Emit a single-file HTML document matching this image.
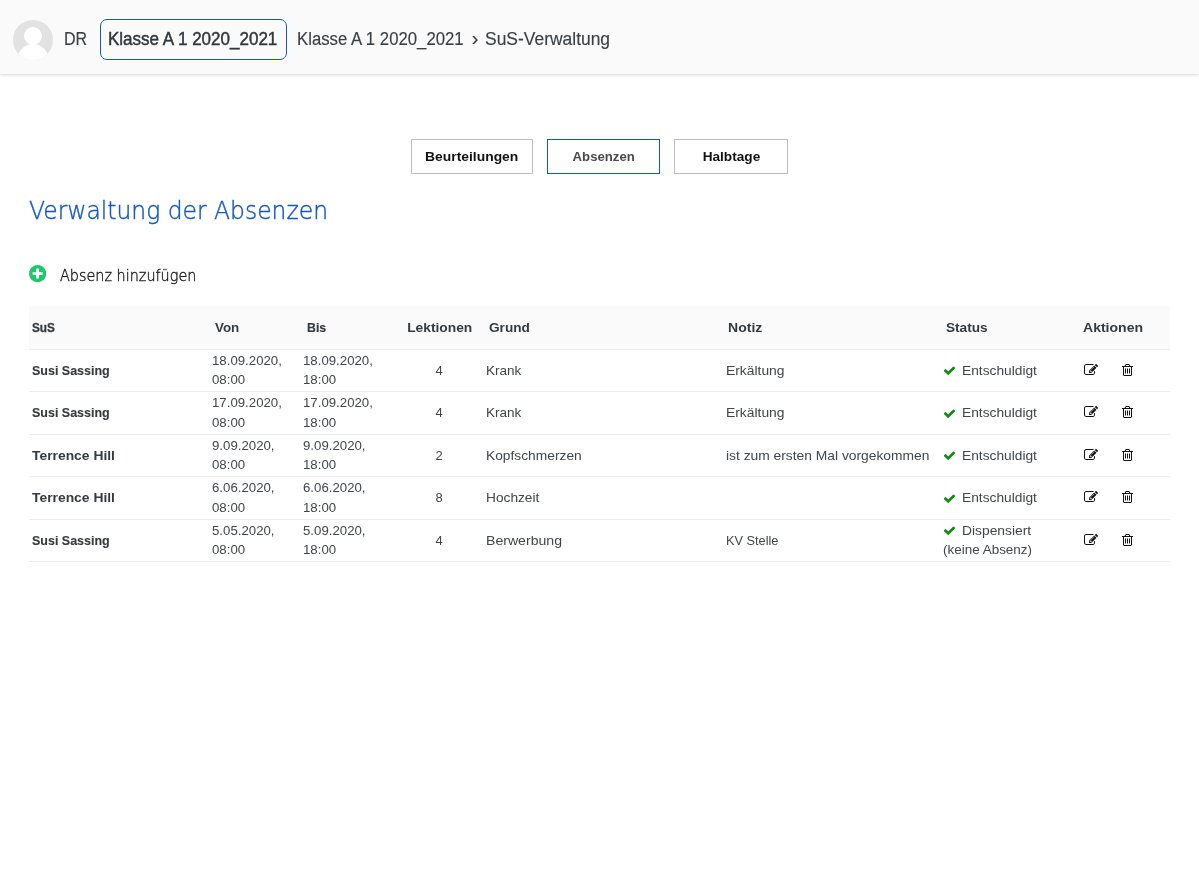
<!DOCTYPE html>
<html lang="de">
<head>
<meta charset="utf-8">
<title>SuS-Verwaltung</title>
<style>
*{box-sizing:border-box;margin:0;padding:0}
html,body{width:1199px;height:870px;overflow:hidden;background:#fff}
body{font-family:"Liberation Sans",sans-serif;color:#373a3c;position:relative}
#app{position:absolute;left:0;top:0;width:1199px;height:870px;will-change:transform}
.abs{position:absolute;white-space:nowrap}
/* ---------- header ---------- */
header{position:absolute;left:0;top:0;width:1199px;height:74px;background:#fafafa;box-shadow:0 1px 3px rgba(0,0,0,.16)}
.avatar{position:absolute;left:13px;top:19.7px;width:40px;height:40px}
.hx{display:inline-block;transform-origin:0 50%;font-size:18px;line-height:22px;color:#3a3f44;top:28px;-webkit-text-stroke:.15px #3a3f44}
.klass{position:absolute;left:100px;top:19px;width:187px;height:41px;border:1px solid #0f57c6;border-radius:7px;background:transparent;box-shadow:0 0 0 1px #fff,inset 0 0 0 1px #fff;
  padding:8px 0 0 7px;white-space:nowrap}
.klass .hx{color:#32373c;-webkit-text-stroke:.45px #32373c}
/* ---------- tabs ---------- */
nav.tabs{position:absolute;left:411px;top:139px;height:35px;white-space:nowrap;font-size:0}
.tabs button{display:inline-block;vertical-align:top;height:35px;border:1px solid #bdbdbd;background:#fff;
  font:bold 13px/33px "Liberation Sans",sans-serif;color:#111;text-align:center;margin-right:14px;padding:0}
.tabs button span{display:inline-block}
.tabs button.on{border-color:#0f57c6;color:#4a4a4a}
/* ---------- title ---------- */
h1{position:absolute;left:28.8px;top:193px;font-family:"DejaVu Sans","Liberation Sans",sans-serif;font-weight:200;font-size:25.5px;line-height:34px;color:#1257c7;white-space:nowrap;transform-origin:0 50%;transform:scaleX(.919);-webkit-text-stroke:.4px #1257c7}
.add{position:absolute;left:28px;top:262px;height:24px}
.add svg{position:absolute;left:.6px;top:3.3px;width:17.2px;height:17.2px}
.add span{position:absolute;left:31.8px;top:3.7px;font-family:"DejaVu Sans","Liberation Sans",sans-serif;font-weight:200;font-size:15.8px;line-height:20px;color:#1c1c1c;white-space:nowrap;transform-origin:0 50%;transform:scaleX(.9115);-webkit-text-stroke:.4px #1c1c1c}
/* ---------- table ---------- */
table{position:absolute;left:29px;top:306px;width:1141px;border-collapse:collapse;table-layout:fixed;font-size:13px;line-height:19.5px;color:#41464b}
th{background:#fafafa;height:43px;text-align:left;font-weight:bold;color:#353a3f;border-bottom:1px solid #ededed;padding:0 0 0 6px;vertical-align:middle}
td{border-bottom:1px solid #ededed;padding:0 0 0 3px;vertical-align:middle;height:42.5px}
td.n{font-weight:bold;color:#353a3f}
td.c,th.c{text-align:center;padding:0}
.sx{display:inline-block;transform-origin:0 50%;white-space:nowrap}
th.c .sx,td.c .sx{transform-origin:50% 50%}
td.d{padding-left:2.5px}
td.d .sx{transform:scaleX(1.018)}
.ic{display:inline-block;vertical-align:middle}
.ck{width:13px;height:13px;margin:-1px 6px 0 0}
.act{display:inline-block;vertical-align:middle;height:16px;position:relative;top:-4px;left:.8px}
.ed{width:14px;height:14px;margin-right:24.6px}
.tr{width:11px;height:14px}
</style>
</head>
<body>
<div id="app">

<header>
  <svg class="avatar" viewBox="0 0 40 40"><defs><clipPath id="avc"><circle cx="20" cy="20" r="20"/></clipPath></defs>
    <circle cx="20" cy="20" r="20" fill="#e2e2e2"/>
    <g clip-path="url(#avc)" fill="#fff"><circle cx="20" cy="16" r="9"/><ellipse cx="20" cy="41" rx="16" ry="17"/></g></svg>
  <span class="abs hx user" style="left:64px;transform:scaleX(.888)">DR</span>
  <div class="klass"><span class="hx" style="transform:scaleX(.945)">Klasse A 1 2020_2021</span></div>
  <nav class="crumbs">
    <span class="abs hx" style="left:297px;transform:scaleX(.93)">Klasse A 1 2020_2021</span>
    <span class="abs hx sep" style="left:471.5px;top:26.5px;font-size:21px">›</span>
    <span class="abs hx" style="left:485px;transform:scaleX(.969)">SuS-Verwaltung</span>
  </nav>
</header>

<nav class="tabs">
  <button style="width:122px"><span style="transform:scaleX(1.066)">Beurteilungen</span></button>
  <button class="on" style="width:113px"><span style="transform:scaleX(1.015)">Absenzen</span></button>
  <button style="width:114px"><span style="transform:scaleX(1.05)">Halbtage</span></button>
</nav>

<h1>Verwaltung der Absenzen</h1>

<a class="add">
  <svg viewBox="0 0 1536 1536"><g transform="translate(0,1408) scale(1,-1)"><path fill="#1dc96b" d="M1216 576v128q0 26 -19 45t-45 19h-256v256q0 26 -19 45t-45 19h-128q-26 0 -45 -19t-19 -45v-256h-256q-26 0 -45 -19t-19 -45v-128q0 -26 19 -45t45 -19h256v-256q0 -26 19 -45t45 -19h128q26 0 45 19t19 45v256h256q26 0 45 19t19 45zM1536 640q0 -209 -103 -385.5 t-279.5 -279.5t-385.5 -103t-385.5 103t-279.5 279.5t-103 385.5t103 385.5t279.5 279.5t385.5 103t385.5 -103t279.5 -279.5t103 -385.5z"/></g></svg>
  <span>Absenz hinzufügen</span>
</a>

<table>
  <colgroup><col style="width:180.5px"><col style="width:91px"><col style="width:94.5px"><col style="width:88px"><col style="width:240px"><col style="width:217px"><col style="width:140px"><col style="width:90px"></colgroup>
  <thead><tr><th style="padding-left:3px"><span class="sx" style="transform:scaleX(0.9072);-webkit-text-stroke:.3px #353a3f">SuS</span></th><th style="padding-left:5px"><span class="sx" style="transform:scaleX(1.03)">Von</span></th><th><span class="sx" style="transform:scaleX(0.9474);-webkit-text-stroke:.15px #353a3f">Bis</span></th><th class="c" style="padding-left:2px"><span class="sx" style="transform:scaleX(1.06)">Lektionen</span></th><th><span class="sx" style="transform:scaleX(1.049)">Grund</span></th><th style="padding-left:5px"><span class="sx" style="transform:scaleX(1.08)">Notiz</span></th><th><span class="sx" style="transform:scaleX(1.0477)">Status</span></th><th style="padding-left:3px"><span class="sx" style="transform:scaleX(1.0795)">Aktionen</span></th></tr></thead>
  <tbody>
  <tr><td class="n"><span class="sx" style="transform:scaleX(0.9605);-webkit-text-stroke:.12px #353a3f">Susi Sassing</span></td><td class="d"><span class="sx">18.09.2020,</span><br><span class="sx">08:00</span></td><td class="d"><span class="sx">18.09.2020,</span><br><span class="sx">18:00</span></td><td class="c">4</td><td><span class="sx" style="transform:scaleX(1.0412)">Krank</span></td><td><span class="sx" style="transform:scaleX(1.0648)">Erkältung</span></td><td class="s"><svg class="ic ck" viewBox="0 0 1792 1792"><g transform="translate(0,1536) scale(1,-1)"><path fill="#0f8a0f" d="M1671 970q0 -40 -28 -68l-724 -724l-136 -136q-28 -28 -68 -28t-68 28l-136 136l-362 362q-28 28 -28 68t28 68l136 136q28 28 68 28t68 -28l294 -295l656 657q28 28 68 28t68 -28l136 -136q28 -28 28 -68z"/></g></svg><span class="sx" style="transform:scaleX(1.0581)">Entschuldigt</span></td><td class="a"><a class="act"><svg class="ic ed" viewBox="0 0 1792 1792"><g transform="translate(0,1536) scale(1,-1)"><path fill="#111" d="M888 352l116 116l-152 152l-116 -116v-56h96v-96h56zM1328 1072q-16 16 -33 -1l-350 -350q-17 -17 -1 -33t33 1l350 350q17 17 1 33zM1408 478v-190q0 -119 -84.5 -203.5t-203.5 -84.5h-832q-119 0 -203.5 84.5t-84.5 203.5v832q0 119 84.5 203.5t203.5 84.5h832q63 0 117 -25q15 -7 18 -23q3 -17 -9 -29l-49 -49q-14 -14 -32 -8q-23 6 -45 6h-832q-66 0 -113 -47t-47 -113v-832q0 -66 47 -113t113 -47h832q66 0 113 47t47 113v126q0 13 9 22l64 64q15 15 35 7t20 -29zM1312 1216l288 -288l-672 -672h-288v288zM1756 1084l-92 -92l-288 288l92 92q28 28 68 28t68 -28l152 -152q28 -28 28 -68t-28 -68z"/></g></svg></a><a class="act"><svg class="ic tr" viewBox="0 0 1408 1792"><g transform="translate(0,1536) scale(1,-1)"><path fill="#111" d="M512 800v-576q0 -14 -9 -23t-23 -9h-64q-14 0 -23 9t-9 23v576q0 14 9 23t23 9h64q14 0 23 -9t9 -23zM768 800v-576q0 -14 -9 -23t-23 -9h-64q-14 0 -23 9t-9 23v576q0 14 9 23t23 9h64q14 0 23 -9t9 -23zM1024 800v-576q0 -14 -9 -23t-23 -9h-64q-14 0 -23 9t-9 23v576q0 14 9 23t23 9h64q14 0 23 -9t9 -23zM1152 76v948h-896v-948q0 -22 7 -40.5t14.5 -27t10.5 -8.5h832q3 0 10.5 8.5t14.5 27t7 40.5zM480 1152h448l-48 117q-7 9 -17 11h-317q-10 -2 -17 -11zM1408 1120v-64q0 -14 -9 -23t-23 -9h-96v-948q0 -83 -47 -143.5t-113 -60.5h-832q-66 0 -113 58.5t-47 141.5v952h-96q-14 0 -23 9t-9 23v64q0 14 9 23t23 9h309l70 167q15 37 54 63t79 26h320q40 0 79 -26t54 -63l70 -167h309q14 0 23 -9t9 -23z"/></g></svg></a></td></tr>
  <tr><td class="n"><span class="sx" style="transform:scaleX(0.9605);-webkit-text-stroke:.12px #353a3f">Susi Sassing</span></td><td class="d"><span class="sx">17.09.2020,</span><br><span class="sx">08:00</span></td><td class="d"><span class="sx">17.09.2020,</span><br><span class="sx">18:00</span></td><td class="c">4</td><td><span class="sx" style="transform:scaleX(1.0412)">Krank</span></td><td><span class="sx" style="transform:scaleX(1.0648)">Erkältung</span></td><td class="s"><svg class="ic ck" viewBox="0 0 1792 1792"><g transform="translate(0,1536) scale(1,-1)"><path fill="#0f8a0f" d="M1671 970q0 -40 -28 -68l-724 -724l-136 -136q-28 -28 -68 -28t-68 28l-136 136l-362 362q-28 28 -28 68t28 68l136 136q28 28 68 28t68 -28l294 -295l656 657q28 28 68 28t68 -28l136 -136q28 -28 28 -68z"/></g></svg><span class="sx" style="transform:scaleX(1.0581)">Entschuldigt</span></td><td class="a"><a class="act"><svg class="ic ed" viewBox="0 0 1792 1792"><g transform="translate(0,1536) scale(1,-1)"><path fill="#111" d="M888 352l116 116l-152 152l-116 -116v-56h96v-96h56zM1328 1072q-16 16 -33 -1l-350 -350q-17 -17 -1 -33t33 1l350 350q17 17 1 33zM1408 478v-190q0 -119 -84.5 -203.5t-203.5 -84.5h-832q-119 0 -203.5 84.5t-84.5 203.5v832q0 119 84.5 203.5t203.5 84.5h832q63 0 117 -25q15 -7 18 -23q3 -17 -9 -29l-49 -49q-14 -14 -32 -8q-23 6 -45 6h-832q-66 0 -113 -47t-47 -113v-832q0 -66 47 -113t113 -47h832q66 0 113 47t47 113v126q0 13 9 22l64 64q15 15 35 7t20 -29zM1312 1216l288 -288l-672 -672h-288v288zM1756 1084l-92 -92l-288 288l92 92q28 28 68 28t68 -28l152 -152q28 -28 28 -68t-28 -68z"/></g></svg></a><a class="act"><svg class="ic tr" viewBox="0 0 1408 1792"><g transform="translate(0,1536) scale(1,-1)"><path fill="#111" d="M512 800v-576q0 -14 -9 -23t-23 -9h-64q-14 0 -23 9t-9 23v576q0 14 9 23t23 9h64q14 0 23 -9t9 -23zM768 800v-576q0 -14 -9 -23t-23 -9h-64q-14 0 -23 9t-9 23v576q0 14 9 23t23 9h64q14 0 23 -9t9 -23zM1024 800v-576q0 -14 -9 -23t-23 -9h-64q-14 0 -23 9t-9 23v576q0 14 9 23t23 9h64q14 0 23 -9t9 -23zM1152 76v948h-896v-948q0 -22 7 -40.5t14.5 -27t10.5 -8.5h832q3 0 10.5 8.5t14.5 27t7 40.5zM480 1152h448l-48 117q-7 9 -17 11h-317q-10 -2 -17 -11zM1408 1120v-64q0 -14 -9 -23t-23 -9h-96v-948q0 -83 -47 -143.5t-113 -60.5h-832q-66 0 -113 58.5t-47 141.5v952h-96q-14 0 -23 9t-9 23v64q0 14 9 23t23 9h309l70 167q15 37 54 63t79 26h320q40 0 79 -26t54 -63l70 -167h309q14 0 23 -9t9 -23z"/></g></svg></a></td></tr>
  <tr><td class="n"><span class="sx" style="transform:scaleX(1.0662)">Terrence Hill</span></td><td class="d"><span class="sx">9.09.2020,</span><br><span class="sx">08:00</span></td><td class="d"><span class="sx">9.09.2020,</span><br><span class="sx">18:00</span></td><td class="c">2</td><td><span class="sx" style="transform:scaleX(1.0599)">Kopfschmerzen</span></td><td><span class="sx" style="transform:scaleX(1.0626)">ist zum ersten Mal vorgekommen</span></td><td class="s"><svg class="ic ck" viewBox="0 0 1792 1792"><g transform="translate(0,1536) scale(1,-1)"><path fill="#0f8a0f" d="M1671 970q0 -40 -28 -68l-724 -724l-136 -136q-28 -28 -68 -28t-68 28l-136 136l-362 362q-28 28 -28 68t28 68l136 136q28 28 68 28t68 -28l294 -295l656 657q28 28 68 28t68 -28l136 -136q28 -28 28 -68z"/></g></svg><span class="sx" style="transform:scaleX(1.0581)">Entschuldigt</span></td><td class="a"><a class="act"><svg class="ic ed" viewBox="0 0 1792 1792"><g transform="translate(0,1536) scale(1,-1)"><path fill="#111" d="M888 352l116 116l-152 152l-116 -116v-56h96v-96h56zM1328 1072q-16 16 -33 -1l-350 -350q-17 -17 -1 -33t33 1l350 350q17 17 1 33zM1408 478v-190q0 -119 -84.5 -203.5t-203.5 -84.5h-832q-119 0 -203.5 84.5t-84.5 203.5v832q0 119 84.5 203.5t203.5 84.5h832q63 0 117 -25q15 -7 18 -23q3 -17 -9 -29l-49 -49q-14 -14 -32 -8q-23 6 -45 6h-832q-66 0 -113 -47t-47 -113v-832q0 -66 47 -113t113 -47h832q66 0 113 47t47 113v126q0 13 9 22l64 64q15 15 35 7t20 -29zM1312 1216l288 -288l-672 -672h-288v288zM1756 1084l-92 -92l-288 288l92 92q28 28 68 28t68 -28l152 -152q28 -28 28 -68t-28 -68z"/></g></svg></a><a class="act"><svg class="ic tr" viewBox="0 0 1408 1792"><g transform="translate(0,1536) scale(1,-1)"><path fill="#111" d="M512 800v-576q0 -14 -9 -23t-23 -9h-64q-14 0 -23 9t-9 23v576q0 14 9 23t23 9h64q14 0 23 -9t9 -23zM768 800v-576q0 -14 -9 -23t-23 -9h-64q-14 0 -23 9t-9 23v576q0 14 9 23t23 9h64q14 0 23 -9t9 -23zM1024 800v-576q0 -14 -9 -23t-23 -9h-64q-14 0 -23 9t-9 23v576q0 14 9 23t23 9h64q14 0 23 -9t9 -23zM1152 76v948h-896v-948q0 -22 7 -40.5t14.5 -27t10.5 -8.5h832q3 0 10.5 8.5t14.5 27t7 40.5zM480 1152h448l-48 117q-7 9 -17 11h-317q-10 -2 -17 -11zM1408 1120v-64q0 -14 -9 -23t-23 -9h-96v-948q0 -83 -47 -143.5t-113 -60.5h-832q-66 0 -113 58.5t-47 141.5v952h-96q-14 0 -23 9t-9 23v64q0 14 9 23t23 9h309l70 167q15 37 54 63t79 26h320q40 0 79 -26t54 -63l70 -167h309q14 0 23 -9t9 -23z"/></g></svg></a></td></tr>
  <tr><td class="n"><span class="sx" style="transform:scaleX(1.0662)">Terrence Hill</span></td><td class="d"><span class="sx">6.06.2020,</span><br><span class="sx">08:00</span></td><td class="d"><span class="sx">6.06.2020,</span><br><span class="sx">18:00</span></td><td class="c">8</td><td><span class="sx" style="transform:scaleX(1.0545)">Hochzeit</span></td><td></td><td class="s"><svg class="ic ck" viewBox="0 0 1792 1792"><g transform="translate(0,1536) scale(1,-1)"><path fill="#0f8a0f" d="M1671 970q0 -40 -28 -68l-724 -724l-136 -136q-28 -28 -68 -28t-68 28l-136 136l-362 362q-28 28 -28 68t28 68l136 136q28 28 68 28t68 -28l294 -295l656 657q28 28 68 28t68 -28l136 -136q28 -28 28 -68z"/></g></svg><span class="sx" style="transform:scaleX(1.0581)">Entschuldigt</span></td><td class="a"><a class="act"><svg class="ic ed" viewBox="0 0 1792 1792"><g transform="translate(0,1536) scale(1,-1)"><path fill="#111" d="M888 352l116 116l-152 152l-116 -116v-56h96v-96h56zM1328 1072q-16 16 -33 -1l-350 -350q-17 -17 -1 -33t33 1l350 350q17 17 1 33zM1408 478v-190q0 -119 -84.5 -203.5t-203.5 -84.5h-832q-119 0 -203.5 84.5t-84.5 203.5v832q0 119 84.5 203.5t203.5 84.5h832q63 0 117 -25q15 -7 18 -23q3 -17 -9 -29l-49 -49q-14 -14 -32 -8q-23 6 -45 6h-832q-66 0 -113 -47t-47 -113v-832q0 -66 47 -113t113 -47h832q66 0 113 47t47 113v126q0 13 9 22l64 64q15 15 35 7t20 -29zM1312 1216l288 -288l-672 -672h-288v288zM1756 1084l-92 -92l-288 288l92 92q28 28 68 28t68 -28l152 -152q28 -28 28 -68t-28 -68z"/></g></svg></a><a class="act"><svg class="ic tr" viewBox="0 0 1408 1792"><g transform="translate(0,1536) scale(1,-1)"><path fill="#111" d="M512 800v-576q0 -14 -9 -23t-23 -9h-64q-14 0 -23 9t-9 23v576q0 14 9 23t23 9h64q14 0 23 -9t9 -23zM768 800v-576q0 -14 -9 -23t-23 -9h-64q-14 0 -23 9t-9 23v576q0 14 9 23t23 9h64q14 0 23 -9t9 -23zM1024 800v-576q0 -14 -9 -23t-23 -9h-64q-14 0 -23 9t-9 23v576q0 14 9 23t23 9h64q14 0 23 -9t9 -23zM1152 76v948h-896v-948q0 -22 7 -40.5t14.5 -27t10.5 -8.5h832q3 0 10.5 8.5t14.5 27t7 40.5zM480 1152h448l-48 117q-7 9 -17 11h-317q-10 -2 -17 -11zM1408 1120v-64q0 -14 -9 -23t-23 -9h-96v-948q0 -83 -47 -143.5t-113 -60.5h-832q-66 0 -113 58.5t-47 141.5v952h-96q-14 0 -23 9t-9 23v64q0 14 9 23t23 9h309l70 167q15 37 54 63t79 26h320q40 0 79 -26t54 -63l70 -167h309q14 0 23 -9t9 -23z"/></g></svg></a></td></tr>
  <tr><td class="n"><span class="sx" style="transform:scaleX(0.9605);-webkit-text-stroke:.12px #353a3f">Susi Sassing</span></td><td class="d"><span class="sx">5.05.2020,</span><br><span class="sx">08:00</span></td><td class="d"><span class="sx">5.09.2020,</span><br><span class="sx">18:00</span></td><td class="c">4</td><td><span class="sx" style="transform:scaleX(1.0842)">Berwerbung</span></td><td><span class="sx" style="transform:scaleX(0.9808)">KV Stelle</span></td><td class="s"><svg class="ic ck" viewBox="0 0 1792 1792"><g transform="translate(0,1536) scale(1,-1)"><path fill="#0f8a0f" d="M1671 970q0 -40 -28 -68l-724 -724l-136 -136q-28 -28 -68 -28t-68 28l-136 136l-362 362q-28 28 -28 68t28 68l136 136q28 28 68 28t68 -28l294 -295l656 657q28 28 68 28t68 -28l136 -136q28 -28 28 -68z"/></g></svg><span class="sx" style="transform:scaleX(1.0625)">Dispensiert</span><br><span class="sx" style="transform:scaleX(1.0355)">(keine Absenz)</span></td><td class="a"><a class="act"><svg class="ic ed" viewBox="0 0 1792 1792"><g transform="translate(0,1536) scale(1,-1)"><path fill="#111" d="M888 352l116 116l-152 152l-116 -116v-56h96v-96h56zM1328 1072q-16 16 -33 -1l-350 -350q-17 -17 -1 -33t33 1l350 350q17 17 1 33zM1408 478v-190q0 -119 -84.5 -203.5t-203.5 -84.5h-832q-119 0 -203.5 84.5t-84.5 203.5v832q0 119 84.5 203.5t203.5 84.5h832q63 0 117 -25q15 -7 18 -23q3 -17 -9 -29l-49 -49q-14 -14 -32 -8q-23 6 -45 6h-832q-66 0 -113 -47t-47 -113v-832q0 -66 47 -113t113 -47h832q66 0 113 47t47 113v126q0 13 9 22l64 64q15 15 35 7t20 -29zM1312 1216l288 -288l-672 -672h-288v288zM1756 1084l-92 -92l-288 288l92 92q28 28 68 28t68 -28l152 -152q28 -28 28 -68t-28 -68z"/></g></svg></a><a class="act"><svg class="ic tr" viewBox="0 0 1408 1792"><g transform="translate(0,1536) scale(1,-1)"><path fill="#111" d="M512 800v-576q0 -14 -9 -23t-23 -9h-64q-14 0 -23 9t-9 23v576q0 14 9 23t23 9h64q14 0 23 -9t9 -23zM768 800v-576q0 -14 -9 -23t-23 -9h-64q-14 0 -23 9t-9 23v576q0 14 9 23t23 9h64q14 0 23 -9t9 -23zM1024 800v-576q0 -14 -9 -23t-23 -9h-64q-14 0 -23 9t-9 23v576q0 14 9 23t23 9h64q14 0 23 -9t9 -23zM1152 76v948h-896v-948q0 -22 7 -40.5t14.5 -27t10.5 -8.5h832q3 0 10.5 8.5t14.5 27t7 40.5zM480 1152h448l-48 117q-7 9 -17 11h-317q-10 -2 -17 -11zM1408 1120v-64q0 -14 -9 -23t-23 -9h-96v-948q0 -83 -47 -143.5t-113 -60.5h-832q-66 0 -113 58.5t-47 141.5v952h-96q-14 0 -23 9t-9 23v64q0 14 9 23t23 9h309l70 167q15 37 54 63t79 26h320q40 0 79 -26t54 -63l70 -167h309q14 0 23 -9t9 -23z"/></g></svg></a></td></tr>
  </tbody>
</table>

</div>
</body>
</html>
